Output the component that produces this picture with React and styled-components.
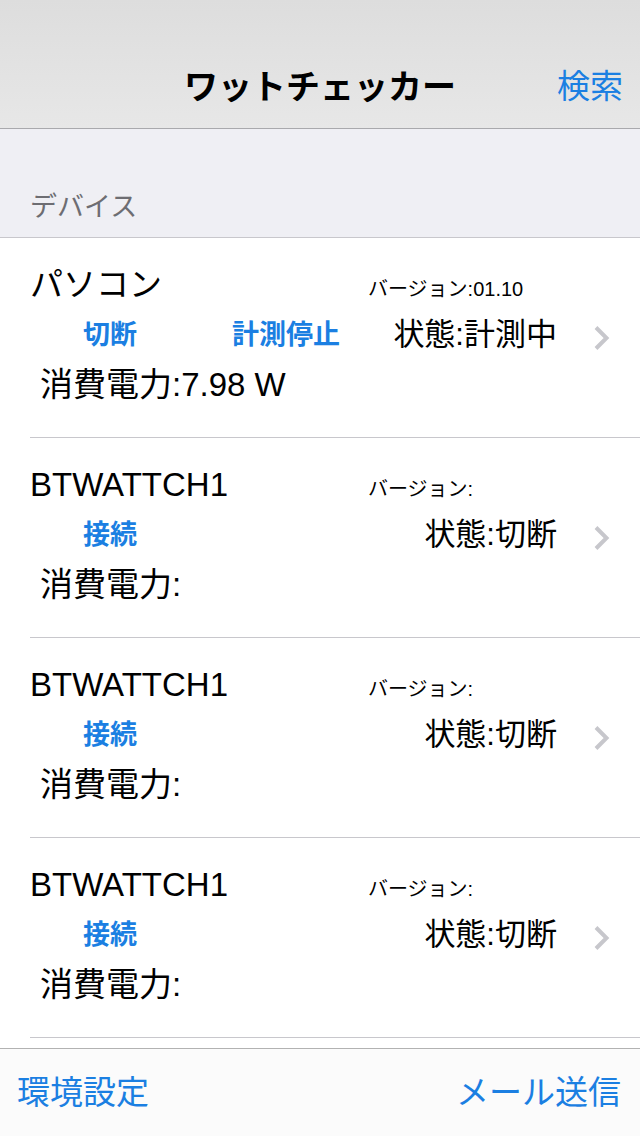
import React from "react";
import styled, { createGlobalStyle } from "styled-components";

const GlobalStyle = createGlobalStyle`
  html, body {
    margin: 0;
    padding: 0;
    background: #ffffff;
  }
  body {
    font-family: "Liberation Sans", "Noto Sans CJK JP", sans-serif;
    color: #000000;
  }
`;

const BLUE = "#1b7fe2";

const Screen = styled.div`
  width: 640px;
  height: 1136px;
  display: flex;
  flex-direction: column;
  overflow: hidden;
  background: #ffffff;
`;

const NavBar = styled.header`
  flex: 0 0 auto;
  height: 88px;
  padding-top: 40px;
  border-bottom: 1px solid #a9a9ad;
  background: linear-gradient(#dddddd, #e7e7e7);
  display: grid;
  grid-template-columns: 1fr auto 1fr;
  align-items: center;
`;

const NavTitle = styled.h1`
  grid-column: 2;
  margin: 0;
  font-size: 34px;
  font-weight: 700;
`;

const NavButton = styled.span`
  grid-column: 3;
  justify-self: end;
  padding-right: 17px;
  font-size: 33px;
  color: ${BLUE};
`;

const SectionHeader = styled.div`
  flex: 0 0 auto;
  height: 109px;
  box-sizing: border-box;
  background: #efeff4;
  border-bottom: 1px solid #c8c7cc;
  display: flex;
  align-items: flex-end;
  padding: 0 0 13px 30px;
  font-size: 27px;
  color: #6d6d72;
`;

const List = styled.ul`
  flex: 1;
  margin: 0;
  padding: 0;
  list-style: none;
  overflow: hidden;
`;

const Row = styled.li`
  margin-left: 30px;
  height: 200px;
  box-sizing: border-box;
  border-bottom: 1px solid #c8c7cc;
  display: flex;
  align-items: center;
`;

const RowBody = styled.div`
  flex: 1;
  align-self: stretch;
  padding-top: 22px;
  display: flex;
  flex-direction: column;
`;

const Line = styled.div`
  height: 50px;
  line-height: 50px;
  display: flex;
  align-items: ${p => p.$align || "center"};
`;

const DeviceName = styled.span`
  width: 338px;
  font-size: 33px;
`;

const Version = styled.span`
  font-size: 20px;
`;

const ActionButton = styled.span`
  font-size: 27px;
  font-weight: 700;
  color: ${BLUE};
  margin-left: ${p => p.$offset}px;
`;

const State = styled.span`
  margin-left: auto;
  font-size: 31px;
`;

const Power = styled.span`
  padding-left: 10px;
  font-size: 33px;
`;

const Chevron = styled.svg`
  flex: 0 0 auto;
  width: 17px;
  height: 26px;
  margin: 0 30px 0 36px;
`;

const Toolbar = styled.footer`
  flex: 0 0 auto;
  height: 88px;
  box-sizing: border-box;
  padding: 0 19px 6px 17px;
  border-top: 1px solid #b2b2b2;
  background: #fbfbfb;
  display: flex;
  align-items: center;
  justify-content: space-between;
`;

const ToolbarButton = styled.span`
  font-size: 33px;
  color: ${BLUE};
`;

const devices = [
  {
    name: "パソコン",
    version: "01.10",
    actions: [
      { label: "切断", offset: 53 },
      { label: "計測停止", offset: 95 },
    ],
    state: "計測中",
    power: "7.98 W",
  },
  { name: "BTWATTCH1", version: "", actions: [{ label: "接続", offset: 53 }], state: "切断", power: "" },
  { name: "BTWATTCH1", version: "", actions: [{ label: "接続", offset: 53 }], state: "切断", power: "" },
  { name: "BTWATTCH1", version: "", actions: [{ label: "接続", offset: 53 }], state: "切断", power: "" },
];

const ChevronIcon = () => (
  <Chevron viewBox="0 0 17 26">
    <path d="M3 2.5 L13.5 13 L3 23.5" fill="none" stroke="#c7c7cc" strokeWidth="4" />
  </Chevron>
);

const DeviceRow = ({ device }) => (
  <Row>
    <RowBody>
      <Line $align="baseline">
        <DeviceName>{device.name}</DeviceName>
        <Version>バージョン:{device.version}</Version>
      </Line>
      <Line>
        {device.actions.map(a => (
          <ActionButton key={a.label} $offset={a.offset}>
            {a.label}
          </ActionButton>
        ))}
        <State>状態:{device.state}</State>
      </Line>
      <Line>
        <Power>消費電力:{device.power}</Power>
      </Line>
    </RowBody>
    <ChevronIcon />
  </Row>
);

export default function App() {
  return (
    <>
      <GlobalStyle />
      <Screen>
        <NavBar>
          <NavTitle>ワットチェッカー</NavTitle>
          <NavButton>検索</NavButton>
        </NavBar>
        <SectionHeader>デバイス</SectionHeader>
        <List>
          {devices.map((d, i) => (
            <DeviceRow key={i} device={d} />
          ))}
        </List>
        <Toolbar>
          <ToolbarButton>環境設定</ToolbarButton>
          <ToolbarButton>メール送信</ToolbarButton>
        </Toolbar>
      </Screen>
    </>
  );
}
